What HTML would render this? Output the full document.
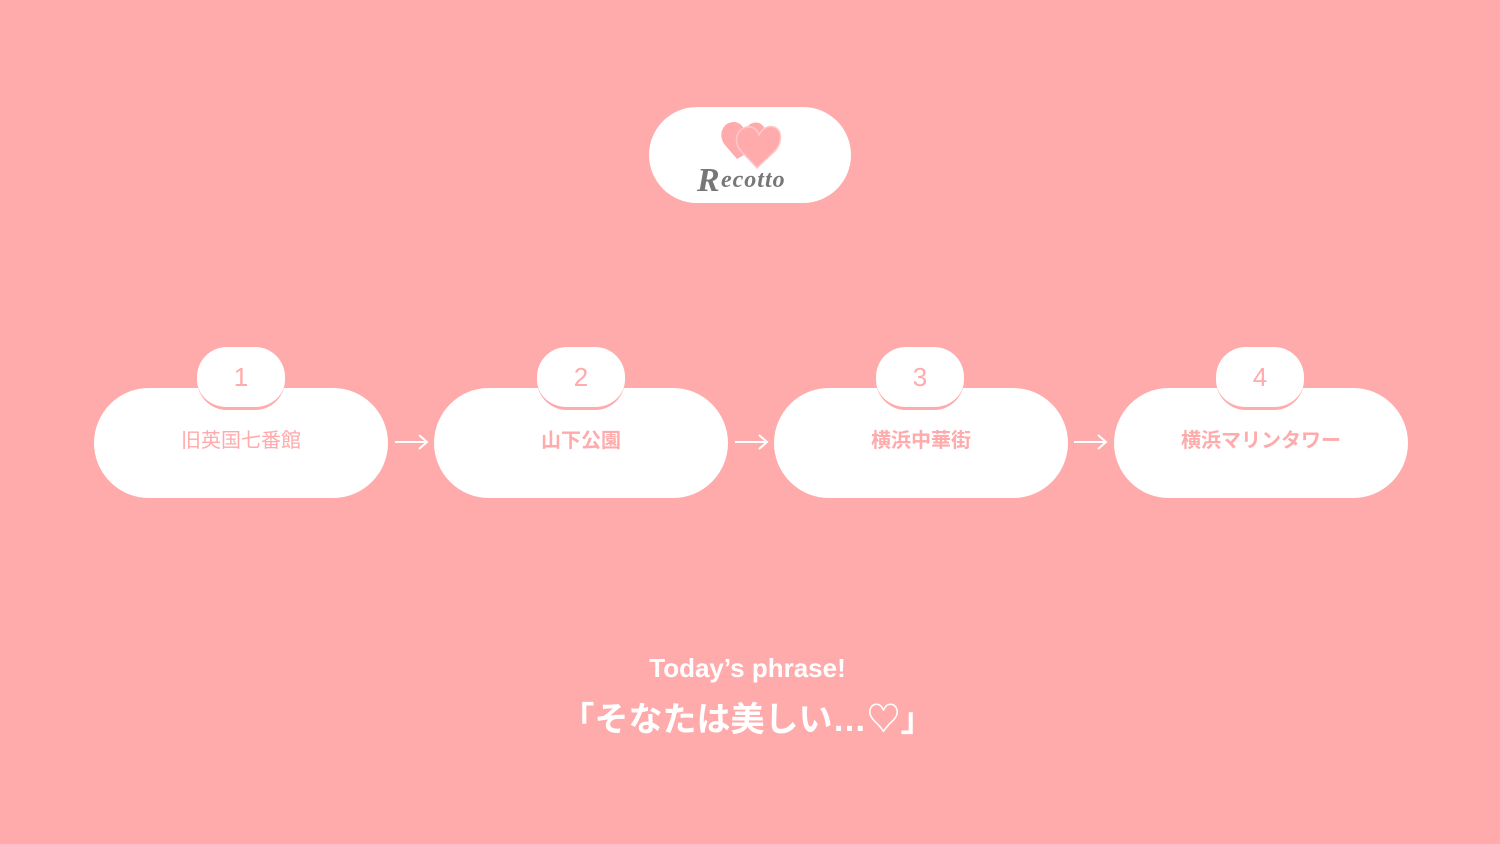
<!DOCTYPE html>
<html><head><meta charset="utf-8"><style>
body{margin:0;width:1500px;height:844px;background:#ffaaab;position:relative;overflow:hidden;font-family:"Liberation Sans","Noto Sans CJK JP",sans-serif}
.logo{position:absolute;left:649px;top:107px;width:202px;height:96px;border-radius:48px;background:#fff}
.big{position:absolute;top:388px;width:294px;height:110px;border-radius:55px;background:#fff;color:#ffaaab;font-size:20px;text-align:center;line-height:106px}
.num{position:absolute;top:347px;width:88px;height:60px;border-radius:30px;background:#fff;border-bottom:3px solid #ffaaab;color:#ffaaab;font-size:26px;text-align:center;line-height:60px;box-sizing:content-box}
.arr{position:absolute;top:432px}
.t{position:absolute;left:0;width:1495px;text-align:center;color:#fff;font-weight:bold}
</style></head><body>
<div class="logo">
<svg width="202" height="96" style="position:absolute;left:0;top:0">
<path d="M88 52 L76 38 C68 28 74 14 86 15 C92 16 95 21 96 24 C98 18 104 14 110 16 C118 19 118 30 112 38 Z" fill="#ffaaab"/>
<path d="M108 61 L92 44 C82 33 90 18 102 20 C107 21 109 25 110 28 C112 23 118 18 125 20 C134 23 133 36 126 44 Z" fill="#ffaaab" stroke="#ffc8c8" stroke-width="1.5"/>
<text x="48" y="84" font-family="Liberation Serif,serif" font-style="italic" font-weight="bold" font-size="34" fill="#777">R</text>
<text x="72" y="80" font-family="Liberation Serif,serif" font-style="italic" font-weight="bold" font-size="24" fill="#777" letter-spacing="1">ecotto</text>
</svg></div>
<div class="big" style="left:94px">旧英国七番館</div>
<div class="big" style="left:434px;font-weight:bold">山下公園</div>
<div class="big" style="left:774px;font-weight:bold">横浜中華街</div>
<div class="big" style="left:1114px;font-weight:bold">横浜マリンタワー</div>
<div class="num" style="left:197px">1</div>
<div class="num" style="left:537px">2</div>
<div class="num" style="left:876px">3</div>
<div class="num" style="left:1216px">4</div>
<svg class="arr" style="left:394px" width="36" height="20"><path d="M1 10H33M25 3L33 10L25 17" stroke="#fff" stroke-width="2" fill="none"/></svg>
<svg class="arr" style="left:734px" width="36" height="20"><path d="M1 10H33M25 3L33 10L25 17" stroke="#fff" stroke-width="2" fill="none"/></svg>
<svg class="arr" style="left:1073px" width="36" height="20"><path d="M1 10H33M25 3L33 10L25 17" stroke="#fff" stroke-width="2" fill="none"/></svg>
<div class="t" style="top:653px;font-size:26px">Today’s phrase!</div>
<div class="t" style="top:692px;font-size:34px">「そなたは美しい…♡」</div>
</body></html>
